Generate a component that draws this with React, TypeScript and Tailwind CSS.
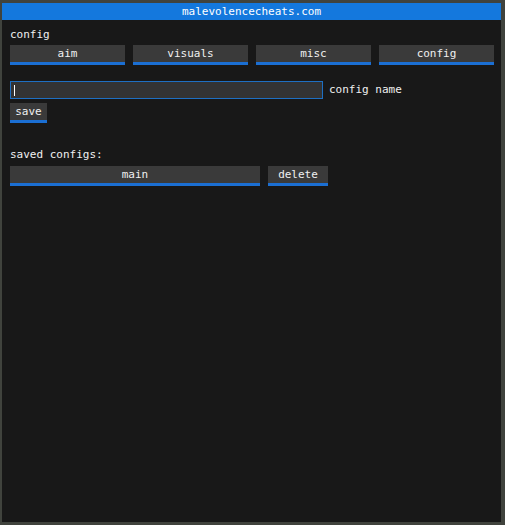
import React from "react";

const mono = "font-['DejaVu_Sans_Mono','Liberation_Mono',monospace]";

const Button: React.FC<{ label: string; className?: string }> = ({ label, className = "" }) => (
  <button
    className={`h-[20px] bg-[#3a3a3a] border-b-[3px] border-[#1b6fd3] text-[11px] leading-[17px] text-[#f0f0f0] text-center ${className}`}
  >
    {label}
  </button>
);

const App: React.FC = () => {
  return (
    <div className={`w-[505px] h-[525px] bg-[#40433d] pt-[3px] pl-[2px] pr-[4px] pb-[3px] ${mono}`}>
      <div className="flex flex-col h-full">
        {/* Title bar */}
        <div className="h-[17px] bg-[#1478dd] text-white text-[11px] leading-[17px] text-center">
          malevolencecheats.com
        </div>

        {/* Body */}
        <div className="flex-1 bg-[#181818] pl-[8px] pr-[7px] pt-[9px] text-[#f0f0f0] text-[11px]">
          <div className="leading-[12px]">config</div>

          <div className="grid grid-cols-4 gap-[8px] mt-[4px]">
            <Button label="aim" />
            <Button label="visuals" />
            <Button label="misc" />
            <Button label="config" />
          </div>

          {/* Config name input */}
          <div className="flex items-center gap-[6px] mt-[16px]">
            <div className="w-[313px] h-[18px] bg-[#333333] border border-[#1e6fc2] flex items-center pl-[3px]">
              <div className="w-px h-[11px] bg-white" />
            </div>
            <span className="leading-[12px]">config name</span>
          </div>

          <div className="mt-[4px]">
            <Button label="save" className="w-[37px]" />
          </div>

          <div className="mt-[26px] leading-[12px]">saved configs:</div>

          <div className="flex gap-[8px] mt-[5px]">
            <Button label="main" className="w-[250px]" />
            <Button label="delete" className="w-[60px]" />
          </div>
        </div>
      </div>
    </div>
  );
};

export default App;
